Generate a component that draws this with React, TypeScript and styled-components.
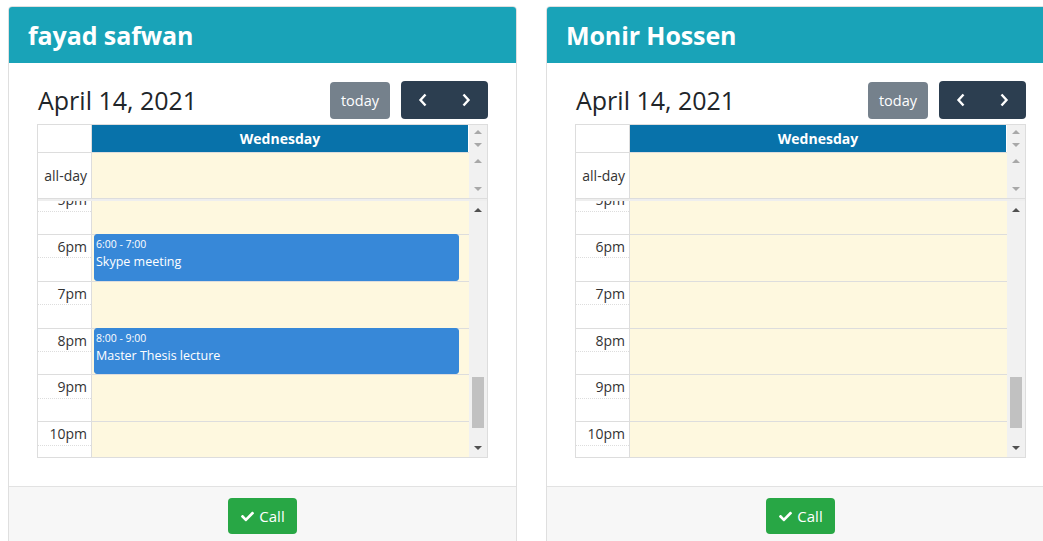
import React from 'react';
import styled, { createGlobalStyle } from 'styled-components';
import { FaCheck } from 'react-icons/fa';

const GlobalStyle = createGlobalStyle`
  body {
    margin: 0;
    background: #ffffff;
    font-family: 'Open Sans', 'Noto Sans', sans-serif;
    color: #212529;
    overflow: hidden;
  }
`;

const SLOT = 23.4;
const START_HOUR = 17;

const Page = styled.div`
  display: flex;
  gap: 29px;
  padding: 6px 8px 0;
  width: max-content;
`;

const Card = styled.div`
  width: 509px;
  box-sizing: border-box;
  border: 1px solid #dfdfdf;
  border-radius: 4px;
  overflow: hidden;
  background: #fff;
`;

const CardHeader = styled.div`
  height: 56px;
  display: flex;
  align-items: center;
  padding: 0 19px;
  background: #19a3b8;
  color: #fff;
  font-size: 25px;
  font-weight: 700;
  letter-spacing: -0.1px;
`;

const CardBody = styled.div`
  padding: 18px 28px 28px;
`;

const CardFooter = styled.div`
  display: flex;
  justify-content: center;
  padding: 11px 0 14px;
  background: #f7f7f7;
  border-top: 1px solid #e2e2e2;
`;

const CallButton = styled.button`
  display: flex;
  align-items: center;
  gap: 5px;
  height: 36px;
  padding: 0 12px 0 13px;
  border: none;
  border-radius: 4px;
  background: #28a745;
  color: #fff;
  font-family: inherit;
  font-size: 15px;
`;

const Toolbar = styled.div`
  display: flex;
  align-items: center;
  height: 38px;
  margin-bottom: 5px;
`;

const Title = styled.h2`
  flex: 1;
  margin: 0 0 0 1px;
  font-size: 25px;
  font-weight: 400;
  color: #212529;
`;

const NavButton = styled.button<{ $disabled?: boolean }>`
  height: 38px;
  display: flex;
  align-items: center;
  justify-content: center;
  border: none;
  background: #2c3e50;
  color: #fff;
  font-family: inherit;
  font-size: 14.5px;
  padding: 0 10px;
  border-radius: 4px;
  opacity: ${(p) => (p.$disabled ? 0.65 : 1)};
`;

const TodayButton = styled(NavButton)`
  width: 60px;
  height: 37px;
  margin-right: 11px;
`;

const ButtonGroup = styled.div`
  display: flex;
  width: 87px;

  & > button {
    flex: 1;
    border-radius: 0;
  }
  & > button:first-child {
    border-radius: 4px 0 0 4px;
  }
  & > button:last-child {
    border-radius: 0 4px 4px 0;
  }
`;

const Grid = styled.div`
  border: 1px solid #dddddd;
  font-size: 14px;
`;

const Row = styled.div<{ $h: number }>`
  display: grid;
  grid-template-columns: 54px 1fr 18px;
  height: ${(p) => p.$h}px;
`;

const AxisCell = styled.div`
  border-right: 1px solid #dddddd;
  display: flex;
  align-items: center;
  justify-content: flex-end;
  padding-right: 4px;
  color: #333;
`;

const DayHeader = styled.div`
  background: #0872aa;
  color: #fff;
  font-weight: 700;
  font-size: 14px;
  display: flex;
  align-items: center;
  justify-content: center;
  margin-right: 1px;
`;

const AllDayLane = styled.div`
  background: #fef8df;
  border-top: 1px solid #dddddd;
`;

const AllDayAxis = styled(AxisCell)`
  border-top: 1px solid #dddddd;
`;

const Divider = styled.div`
  height: 2px;
  background: #eeeeee;
  border-top: 1px solid #dddddd;
`;

const ScrollTrack = styled.div<{ $pad?: number }>`
  background: #f1f1f1;
  display: flex;
  flex-direction: column;
  align-items: center;
  justify-content: space-between;
  padding: ${(p) => p.$pad ?? 6}px 0;
  box-sizing: border-box;
  position: relative;
`;

const Arrow = styled.span<{ $dir: 'up' | 'down'; $dark?: boolean }>`
  width: 0;
  height: 0;
  border-left: 4px solid transparent;
  border-right: 4px solid transparent;
  ${(p) =>
    p.$dir === 'up'
      ? `border-bottom: 4px solid ${p.$dark ? '#505050' : '#a8a8a8'};`
      : `border-top: 4px solid ${p.$dark ? '#505050' : '#a8a8a8'};`}
`;

const Thumb = styled.div`
  position: absolute;
  left: 3px;
  right: 3px;
  top: 176px;
  height: 51px;
  background: #c1c1c1;
`;

const SlotViewport = styled.div`
  grid-column: 1 / 3;
  overflow: hidden;
`;

const SlotStack = styled.div`
  margin-top: -13.8px;
  position: relative;
`;

const SlotRow = styled.div<{ $half: boolean }>`
  display: grid;
  grid-template-columns: 54px 1fr;
  height: ${SLOT}px;
  box-sizing: border-box;
  border-top: 1px ${(p) => (p.$half ? 'dotted' : 'solid')} #dddddd;
`;

const SlotLabel = styled.div`
  border-right: 1px solid #dddddd;
  text-align: right;
  padding-right: 4px;
  line-height: 24px;
  color: #333;
`;

const SlotLane = styled.div`
  background: #fef8df;
`;

const EventLayer = styled.div`
  position: absolute;
  left: 56px;
  right: 10px;
  top: 0;
`;

const EventBox = styled.div`
  position: absolute;
  left: 0;
  right: 0;
  box-sizing: border-box;
  background: #3788d8;
  border: 1px solid #3788d8;
  border-radius: 3px;
  color: #fff;
  padding: 1px 1px;
`;

const EventTime = styled.div`
  font-size: 10.5px;
  line-height: 16px;
`;

const EventTitle = styled.div`
  font-size: 12.5px;
  line-height: 20px;
`;

const Chevron = ({ dir }: { dir: 'left' | 'right' }) => (
  <svg width="10" height="14" viewBox="0 0 10 14">
    <polyline
      points={dir === 'left' ? '7.5,1.5 2.5,7 7.5,12.5' : '2.5,1.5 7.5,7 2.5,12.5'}
      fill="none"
      stroke="#fff"
      strokeWidth="2.4"
    />
  </svg>
);

type CalEvent = { start: number; end: number; time: string; title: string };

const hours = [17, 18, 19, 20, 21, 22, 23];
const fmt = (h: number) => `${h - 12}pm`;

function Calendar({ events }: { events: CalEvent[] }) {
  return (
    <>
      <Toolbar>
        <Title>April 14, 2021</Title>
        <TodayButton $disabled>today</TodayButton>
        <ButtonGroup>
          <NavButton>
            <Chevron dir="left" />
          </NavButton>
          <NavButton>
            <Chevron dir="right" />
          </NavButton>
        </ButtonGroup>
      </Toolbar>
      <Grid>
        <Row $h={27}>
          <AxisCell />
          <DayHeader>Wednesday</DayHeader>
          <ScrollTrack $pad={5}>
            <Arrow $dir="up" />
            <Arrow $dir="down" />
          </ScrollTrack>
        </Row>
        <Row $h={46}>
          <AllDayAxis>all-day</AllDayAxis>
          <AllDayLane />
          <ScrollTrack $pad={7}>
            <Arrow $dir="up" />
            <Arrow $dir="down" />
          </ScrollTrack>
        </Row>
        <Divider />
        <Row $h={256}>
          <SlotViewport>
            <SlotStack>
              {hours.map((h) => (
                <React.Fragment key={h}>
                  <SlotRow $half={false}>
                    <SlotLabel>{fmt(h)}</SlotLabel>
                    <SlotLane />
                  </SlotRow>
                  <SlotRow $half>
                    <SlotLabel />
                    <SlotLane />
                  </SlotRow>
                </React.Fragment>
              ))}
              <EventLayer>
                {events.map((e) => (
                  <EventBox
                    key={e.title}
                    style={{
                      top: (e.start - START_HOUR) * SLOT * 2,
                      height: (e.end - e.start) * SLOT * 2,
                    }}
                  >
                    <EventTime>{e.time}</EventTime>
                    <EventTitle>{e.title}</EventTitle>
                  </EventBox>
                ))}
              </EventLayer>
            </SlotStack>
          </SlotViewport>
          <ScrollTrack $pad={7}>
            <Arrow $dir="up" $dark />
            <Thumb />
            <Arrow $dir="down" $dark />
          </ScrollTrack>
        </Row>
      </Grid>
    </>
  );
}

const people: { name: string; events: CalEvent[] }[] = [
  {
    name: 'fayad safwan',
    events: [
      { start: 18, end: 19, time: '6:00 - 7:00', title: 'Skype meeting' },
      { start: 20, end: 21, time: '8:00 - 9:00', title: 'Master Thesis lecture' },
    ],
  },
  { name: 'Monir Hossen', events: [] },
];

export default function App() {
  return (
    <>
      <GlobalStyle />
      <Page>
        {people.map((p) => (
          <Card key={p.name}>
            <CardHeader>{p.name}</CardHeader>
            <CardBody>
              <Calendar events={p.events} />
            </CardBody>
            <CardFooter>
              <CallButton>
                <FaCheck size={13} />
                Call
              </CallButton>
            </CardFooter>
          </Card>
        ))}
      </Page>
    </>
  );
}
